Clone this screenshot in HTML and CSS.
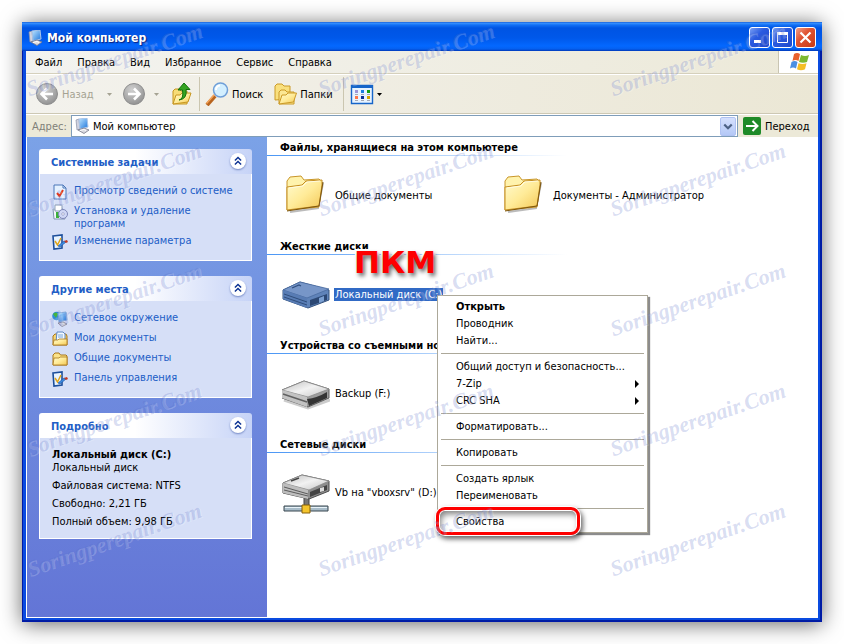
FILE: index.html
```html
<!DOCTYPE html>
<html lang="ru">
<head>
<meta charset="utf-8">
<title>Мой компьютер</title>
<link rel="stylesheet" href="styles.css">
</head>
<body>
<svg class="defs" aria-hidden="true">
  <defs>
    <linearGradient id="gFolder" x1="0" y1="0" x2="1" y2="1"><stop offset="0" stop-color="#fffbd0"/><stop offset=".5" stop-color="#ffeb98"/><stop offset="1" stop-color="#f3c755"/></linearGradient>
    <radialGradient id="gGrey" cx=".4" cy=".3" r=".8"><stop offset="0" stop-color="#d0d0d0"/><stop offset=".6" stop-color="#a8a8a8"/><stop offset="1" stop-color="#8a8a8a"/></radialGradient>
    <linearGradient id="gScreen" x1="0" y1="0" x2="1" y2="1"><stop offset="0" stop-color="#bfe6ff"/><stop offset="1" stop-color="#1b74dc"/></linearGradient>
    <linearGradient id="gSilver" x1="0" y1="0" x2="1" y2="1"><stop offset="0" stop-color="#bdbdbd"/><stop offset=".5" stop-color="#f2f2f2"/><stop offset="1" stop-color="#c4c4c4"/></linearGradient>
    <symbol id="pc" viewBox="0 0 16 16">
      <path d="M1 2l3-1 1 10-3 1z" fill="#d0d3e0" stroke="#8a8fa5" stroke-width=".7"/>
      <path d="M4 1l8-1 1 9-8 2z" fill="url(#gScreen)" stroke="#a9c4e8" stroke-width="1"/>
      <path d="M3 12l6-2 5 2-5 3.500z" fill="#d9d9df" stroke="#77798a" stroke-width=".8"/>
      <path d="M5 12.500l4-1 2 1" fill="none" stroke="#fff"/>
    </symbol>
    <symbol id="bigfolder" viewBox="0 0 48 48">
      <path d="M8 41l28-4 5-25" fill="none" stroke="#777" stroke-opacity=".5" stroke-width="2"/>
      <path d="M5 39V10l3-4 11-1 3 4 15-1 3 3-3 25z" fill="#fff3ad" stroke="#c9962a" stroke-width="1"/>
      <path d="M5 39V16l15-2 4-4 16-1v5l-3 21z" fill="url(#gFolder)" stroke="#c58e21" stroke-width="1"/>
      <path d="M7 17l14-2 4-4 13-1" fill="none" stroke="#fffbe0" stroke-width="1"/>
      <path d="M5 40l32-5 4-24" fill="none" stroke="#7d5710" stroke-width="1"/>
    </symbol>
    <symbol id="smallfolder" viewBox="0 0 16 16">
      <path d="M1 14V4l2-2h4l1.500 2H14l1 1v9z" fill="#fbe38a" stroke="#a9771b"/>
      <path d="M1 14l1-7h5l1-1h7v8z" fill="url(#gFolder)" stroke="#a9771b" stroke-width=".8"/>
    </symbol>
    <symbol id="control" viewBox="0 0 16 16">
      <path d="M1 2l9-1v13l-8 1z" fill="#e9f4ff" stroke="#1d4f9c" stroke-width="1.600"/>
      <path d="M3 7l2.500 4L9 4" fill="none" stroke="#e0a51a" stroke-width="1.500"/>
      <path d="M6 12l6-5 2 1-6 5z" fill="#3c8be0" stroke="#1d4f9c" stroke-width=".6"/>
      <path d="M12 7l3-1 1 2-2 1z" fill="#c43a22"/>
    </symbol>
    <symbol id="up2" viewBox="0 0 18 18">
      <path d="M5.500 8.500L9 5l3.500 3.500M5.500 13L9 9.500 12.500 13" fill="none" stroke="#0b3192" stroke-width="1.600"/>
    </symbol>
    <symbol id="down" viewBox="0 0 5 3"><path d="M0 0h5L2.500 3z" fill="currentColor"/></symbol>
  </defs>
</svg>

<div class="window">
  <header class="titlebar">
    <svg class="i16"><use href="#pc"/></svg>
    <h1>Мой компьютер</h1>
    <button class="cap" aria-label="Свернуть"><svg viewBox="0 0 19 19"><path d="M4 12h7v3H4z" fill="#fff"/></svg></button>
    <button class="cap" aria-label="Развернуть"><svg viewBox="0 0 19 19"><path d="M4.500 4.500v10h10v-10z" fill="none" stroke="#fff"/><path d="M4 4h11v3H4z" fill="#fff"/></svg></button>
    <button class="cap cap-close" aria-label="Закрыть"><svg viewBox="0 0 19 19"><path d="M4.500 4.500l10 10M14.500 4.500l-10 10" stroke="#fff" stroke-width="2.200"/></svg></button>
  </header>

  <div class="client">
    <nav class="menubar">
      <button>Файл</button><button>Правка</button><button>Вид</button><button>Избранное</button><button>Сервис</button><button>Справка</button>
      <span class="flag"><svg viewBox="0 0 20 18">
        <path d="M5 1q3-2 6 0L9.500 8q-3-2-6 0z" fill="#e8602c"/><path d="M12 2q4 2 8 0L18 9q-4 1.500-8 0z" fill="#7cb82f"/>
        <path d="M2.500 9q3-2 6 0L7 15.500q-3-2-6 0z" fill="#4b8fe2"/><path d="M9.500 10.200q4 1.500 8 0l-1.500 6q-4 2-8 0z" fill="#f4bd25"/></svg></span>
    </nav>

    <div class="toolbar">
      <button class="tool off back"><svg class="i24" viewBox="0 0 24 24"><circle cx="12" cy="12" r="10.500" fill="url(#gGrey)" stroke="#8e8e8e"/><path d="M18 12H7M12 6.500L6.500 12l5.500 5.500" fill="none" stroke="#fff" stroke-width="2.600"/></svg>Назад<svg class="arr"><use href="#down"/></svg></button>
      <button class="tool off fwd" aria-label="Вперед"><svg class="i24" viewBox="0 0 24 24"><circle cx="12" cy="12" r="10.500" fill="url(#gGrey)" stroke="#8e8e8e"/><path d="M6 12h11M12 6.500l5.500 5.500-5.500 5.500" fill="none" stroke="#fff" stroke-width="2.600"/></svg><svg class="arr"><use href="#down"/></svg></button>
      <button class="tool up" aria-label="Вверх"><svg class="i24" viewBox="0 0 24 24"><path d="M3 22V9l2-2h4l2 2h6v13z" fill="#f7dc77" stroke="#c79621"/><path d="M3 22l3-9h4l2-2h9l-3 9z" fill="url(#gFolder)" stroke="#c79621"/><path d="M9 18q5-1 3.500-10H8l6-7 6 6.500h-4Q17.500 17 9 18z" fill="#35a422" stroke="#11710c"/></svg></button>
      <span class="bar"></span>
      <button class="tool"><svg class="i24" viewBox="0 0 24 24"><path d="M2 23l8-9" stroke="#b8641e" stroke-width="4"/><path d="M1.500 21.500l8-9" stroke="#f3a45b" stroke-width="1.500"/><circle cx="15.500" cy="8" r="7" fill="#d3efff" stroke="#6f9fd8" stroke-width="1.500"/><path d="M11 8q0-4 4-4.500" fill="none" stroke="#fff" stroke-width="2"/></svg>Поиск</button>
      <button class="tool folders"><svg class="i24" viewBox="0 0 24 24"><path d="M2 18V4l2-2h5l2 2h6v13z" fill="#f9e07e" stroke="#cb9a26"/><path d="M6 22V10l2-2h4l2 2h7v12z" fill="#fbe794" stroke="#cb9a26"/><path d="M6 22l3-9h4l2-2h8.500l-3 9z" fill="url(#gFolder)" stroke="#cb9a26"/></svg>Папки</button>
      <span class="bar"></span>
      <button class="tool views" aria-label="Вид"><svg class="i24" viewBox="0 0 24 24"><path d="M1.500 3.500h21v18h-21z" fill="#e7f3ff" stroke="#1665c9" stroke-width="1.400"/><path d="M1 3h22v3H1z" fill="#1665c9"/><path d="M5 8h3v3H5z" fill="#9c96d6"/><path d="M11 8h3v3h-3z" fill="#1b7fe0"/><path d="M17 8h3v3h-3z" fill="#13a015"/><path d="M5 14h3v3H5z" fill="#ff7748"/><path d="M11 14h3v3h-3z" fill="#0b2f93"/><path d="M17 14h3v3h-3z" fill="#d9a400"/><path d="M5 12.500h3m3 0h3m3 0h3M5 18.500h3m3 0h3m3 0h3" stroke="#a5a9b5"/></svg><svg class="arr"><use href="#down"/></svg></button>
    </div>

    <form class="address">
      <label for="addr">Адрес:</label>
      <div class="combo">
        <svg class="i16"><use href="#pc"/></svg>
        <input id="addr" type="text" value="Мой компьютер">
        <button type="button" class="drop" aria-label="Показать список"><svg viewBox="0 0 15 18"><path d="M3.500 7l4 4 4-4" fill="none" stroke="#4d6185" stroke-width="2.400"/></svg></button>
      </div>
      <button type="button" class="go"><svg viewBox="0 0 18 18"><rect width="18" height="18" rx="2" fill="#1e8a28"/><path d="M3 9h11M9.500 4l5 5-5 5" fill="none" stroke="#fff" stroke-width="2"/></svg>Переход</button>
    </form>

    <div class="body">
      <aside class="side">
        <section class="panel">
          <h2>Системные задачи<button aria-label="Свернуть раздел"><svg><use href="#up2"/></svg></button></h2>
          <ul>
            <li><svg class="i16" viewBox="0 0 16 16"><path d="M2 1h9l3 3v11H2z" fill="#e4f1ff" stroke="#4a77b8"/><path d="M11 1v3h3" fill="none" stroke="#4a77b8"/><path d="M5 9l2.500 3L11 6" fill="none" stroke="#e0391c" stroke-width="2"/></svg><a href="#">Просмотр сведений о системе</a></li>
            <li><svg class="i16" viewBox="0 0 16 16"><path d="M1 5h10l2 10H2z" fill="#f2f6fb" stroke="#7f93b0"/><path d="M3 1h7v6H3z" fill="#fff" stroke="#8699b5"/><path d="M4 8h3v6H4z" fill="#3bb03a"/><circle cx="11" cy="10" r="4.500" fill="#cfd7f5" stroke="#7d86b8"/><circle cx="11" cy="10" r="1.300" fill="#fff" stroke="#7d86b8" stroke-width=".6"/></svg><a href="#">Установка и удаление программ</a></li>
            <li><svg class="i16"><use href="#control"/></svg><a href="#">Изменение параметра</a></li>
          </ul>
        </section>
        <section class="panel">
          <h2>Другие места<button aria-label="Свернуть раздел"><svg><use href="#up2"/></svg></button></h2>
          <ul>
            <li><svg class="i16" viewBox="0 0 16 16"><circle cx="4.500" cy="5" r="4.300" fill="#2f8fd8"/><path d="M1 3q3-3 5 0L4 7z" fill="#47b53c"/><path d="M6 2l8-1 1 8-8 2z" fill="url(#gScreen)" stroke="#7fa6d8"/><path d="M6 12l5-1 4 2-5 2.500z" fill="#d5d5de" stroke="#777a90" stroke-width=".8"/></svg><a href="#">Сетевое окружение</a></li>
            <li><svg class="i16" viewBox="0 0 16 16"><path d="M1 14V5l2-2h11l1 2v9z" fill="#f6d573" stroke="#a9771b"/><path d="M5 1h6l2 2v8H4z" fill="#f4faff" stroke="#5d86c4"/><path d="M6 4h5M6 6h5" stroke="#76a5de"/><path d="M1 14l1-5h4l1-1h8v6z" fill="url(#gFolder)" stroke="#a9771b" stroke-width=".8"/></svg><a href="#">Мои документы</a></li>
            <li><svg class="i16"><use href="#smallfolder"/></svg><a href="#">Общие документы</a></li>
            <li><svg class="i16"><use href="#control"/></svg><a href="#">Панель управления</a></li>
          </ul>
        </section>
        <section class="panel">
          <h2>Подробно<button aria-label="Свернуть раздел"><svg><use href="#up2"/></svg></button></h2>
          <div class="details">
            <p><b>Локальный диск (C:)</b><br>Локальный диск</p>
            <p>Файловая система: NTFS</p>
            <p>Свободно: 2,21 ГБ</p>
            <p>Полный объем: 9,98 ГБ</p>
          </div>
        </section>
      </aside>

      <main class="main">
        <section class="group">
          <h3>Файлы, хранящиеся на этом компьютере</h3>
          <div class="items">
            <div class="item"><svg class="i48"><use href="#bigfolder"/></svg><span>Общие документы</span></div>
            <div class="item"><svg class="i48"><use href="#bigfolder"/></svg><span>Документы - Администратор</span></div>
          </div>
        </section>
        <section class="group">
          <h3>Жесткие диски</h3>
          <div class="items">
            <div class="item"><svg class="i48" viewBox="0 0 48 48"><path d="M1 20L18 12l29 8v10L26 38 1 29z" fill="#5f83b9" stroke="#36547f"/><path d="M1 20L18 12l29 7-22 9z" fill="#7796c8" stroke="#496b9f" stroke-width=".8"/><path d="M1 20l24 8v10L1 29z" fill="#587cb4"/><path d="M2 24l23 8M2 27l23 8" stroke="#304e7b"/><path d="M28 30l17-6v6l-17 6z" fill="#2c4874"/><path d="M37 28l5-2v5l-5 2z" fill="#7ba0d2"/><path d="M10 18l7-3 2 1" fill="none" stroke="#2f4e7f" stroke-width="1.200"/></svg><span class="sel">Локальный диск (C:)</span></div>
          </div>
        </section>
        <section class="group">
          <h3>Устройства со съемными носителями</h3>
          <div class="items">
            <div class="item"><svg class="i48" viewBox="0 0 48 48"><path d="M2 31l24 8 22-8" fill="none" stroke="#999" stroke-opacity=".5" stroke-width="3"/><path d="M0 21L22 12l25 8v9l-21 9L0 29z" fill="#9c9c9c" stroke="#5d5d5d"/><path d="M0 21L22 12l25 8-21 8z" fill="url(#gSilver)" stroke="#8a8a8a" stroke-width=".8"/><path d="M0 21l25 7v10L0 29z" fill="#c2c2c2"/><path d="M1 25l24 8" stroke="#606060" stroke-width="1.500"/><path d="M25 30q10-1 20-7v6l-18 8z" fill="#343434"/></svg><span>Backup (F:)</span></div>
          </div>
        </section>
        <section class="group">
          <h3>Сетевые диски</h3>
          <div class="items">
            <div class="item"><svg class="i48" viewBox="0 0 48 48"><path d="M22 30h5v10h-5z" fill="#777" stroke="#444"/><path d="M2 38h44v5H2z" fill="#a8bcc9" stroke="#39464f"/><path d="M3 39.500h42" stroke="#e8f3f9"/><path d="M20 37h8v8h-8z" fill="#f5c52c" stroke="#87600c"/><path d="M1 15L20 7l27 6v10l-20 8L1 25z" fill="#8d8d8d" stroke="#4c4c4c"/><path d="M1 15L20 7l27 6-20 9z" fill="url(#gSilver)" stroke="#8a8a8a" stroke-width=".8"/><path d="M1 15l25 7v9L1 25z" fill="#bdbdbd"/><path d="M2 19l24 7M2 22l24 6" stroke="#5b5b5b"/><path d="M28 24l17-7v5l-17 7z" fill="#444"/><path d="M38 20l4-1v4l-4 1z" fill="#ddd"/><path d="M9 13l8-3" stroke="#444" stroke-width="1.500"/></svg><span>Vb на "vboxsrv" (D:)</span></div>
          </div>
        </section>

        <div class="hint">ПКМ</div>

        <div class="context" role="menu">
          <button role="menuitem"><b>Открыть</b></button>
          <button role="menuitem">Проводник</button>
          <button role="menuitem">Найти...</button>
          <hr>
          <button role="menuitem">Общий доступ и безопасность...</button>
          <button role="menuitem" class="more">7-Zip</button>
          <button role="menuitem" class="more">CRC SHA</button>
          <hr>
          <button role="menuitem">Форматировать...</button>
          <hr>
          <button role="menuitem">Копировать</button>
          <hr>
          <button role="menuitem">Создать ярлык</button>
          <button role="menuitem">Переименовать</button>
          <hr>
          <button role="menuitem" class="ringed">Свойства</button>
        </div>
      </main>
    </div>
  </div>

  <div class="marks" aria-hidden="true">
    <span>Soringperepair.Com</span><span>Soringperepair.Com</span><span>Soringperepair.Com</span>
    <span>Soringperepair.Com</span><span>Soringperepair.Com</span><span>Soringperepair.Com</span>
    <span>Soringperepair.Com</span><span>Soringperepair.Com</span><span>Soringperepair.Com</span>
    <span>Soringperepair.Com</span><span>Soringperepair.Com</span><span>Soringperepair.Com</span>
    <span>Soringperepair.Com</span><span>Soringperepair.Com</span><span>Soringperepair.Com</span>
  </div>
</div>
</body>
</html>
```
FILE: styles.css
```css
*, *::after { box-sizing: border-box; }

body {
  margin: 0;
  padding: 22px;
  min-height: 100vh;
  display: flex;
  background: #fff;
  color: #000;
  font: 11px/13px "DejaVu Sans Condensed", Tahoma, "DejaVu Sans", sans-serif;
}

button, input { font: inherit; color: inherit; margin: 0; padding: 0; border: 0; background: none; }
button { display: flex; align-items: center; white-space: nowrap; }
h1, h2, h3, p, ul { margin: 0; padding: 0; }
svg { display: block; flex: none; }

.defs { position: absolute; width: 0; height: 0; }
.i16 { width: 16px; height: 16px; }
.i24 { width: 24px; height: 24px; }
.i48 { width: 48px; height: 48px; }

/* Window frame */
.window {
  position: relative;
  flex: 1;
  display: flex;
  flex-direction: column;
  padding: 0 4px 4px;
  background: #0a4be0;
  box-shadow: inset 0 0 0 1px #0019a8, inset -2px -2px 0 #001ea0, 0 2px 20px rgba(0, 0, 0, .6);
}

.titlebar {
  display: flex;
  align-items: center;
  gap: 2px;
  height: 29px;
  margin: 0 -4px;
  padding: 2px 6px 0 6px;
  background: linear-gradient(#0a50d0 0, #3c94ff 1px, #1270f5 3px, #0054e3 6px, #0058ea 16px, #0368ff 24px, #0560f0 27px, #0038b8 29px);
}
.titlebar h1 {
  flex: 1;
  margin-left: 1px;
  color: #fff;
  font-size: 12px;
  line-height: 16px;
  text-shadow: 1px 1px 1px #0b1f7c;
}
.cap {
  width: 21px;
  height: 21px;
  border: 1px solid #fff;
  border-radius: 3px;
  background: linear-gradient(135deg, #7ba0f4, #2a5be0 40%, #1d48cc);
}
.cap svg { width: 19px; height: 19px; }
.cap-close { background: linear-gradient(135deg, #f0a08a, #e05433 40%, #c63a15); }

.client { flex: 1; display: flex; flex-direction: column; background: #fff; }

/* Menu bar */
.menubar {
  display: flex;
  height: 23px;
  padding-left: 1px;
  background: linear-gradient(90deg, #f3f3f0, #ece9d8);
  border-bottom: 1px solid #d5d0bc;
}
.menubar button { padding: 0 8px 0 7px; }
.menubar button:first-child { padding-left: 8px; }
.flag {
  display: flex;
  align-items: center;
  justify-content: center;
  width: 40px;
  margin-left: auto;
  background: #fff;
  border-left: 1px solid #c9c5b2;
}
.flag svg { width: 20px; height: 18px; }

/* Toolbar */
.toolbar {
  display: flex;
  align-items: center;
  height: 40px;
  padding-left: 9px;
  background: linear-gradient(90deg, #f3f2ed, #ebe7d5);
  border-top: 1px solid #fff;
  border-bottom: 1px solid #cdc8b4;
}
.tool { gap: 3px; }
.off { color: #a5a393; }
.arr { width: 5px; height: 3px; }
.back { width: 87px; }
.back .arr { margin-left: auto; margin-right: 10px; }
.fwd { width: 48px; gap: 8px; }
.up { width: 29px; }
.bar { width: 1px; height: 34px; margin-right: 5px; background: #cbc6b0; }
.folders { margin: 0 10px; }
.views { margin-left: 1px; }

/* Address bar */
.address {
  display: flex;
  height: 23px;
  border-top: 1px solid #fff;
  background: #ece9d8;
}
.address label { width: 45px; padding: 5px 0 0 6px; color: #808078; }
.combo {
  flex: 1;
  display: flex;
  align-items: center;
  gap: 2px;
  padding: 0 1px 0 3px;
  background: #fff;
  border: 1px solid #7f9db9;
}
.combo input { flex: 1; min-width: 0; outline: 0; }
.drop {
  width: 16px;
  height: 19px;
  border: 1px solid #b0c2f2;
  border-radius: 2px;
  background: linear-gradient(#d5e0fd, #b4c8f6);
}
.go { width: 80px; gap: 4px; padding-left: 5px; }
.go svg { width: 18px; height: 18px; }

.body { flex: 1; display: flex; }

/* Task pane */
.side {
  width: 241px;
  padding: 12px 15px 12px 12px;
  border-left: 1px solid #fff;
  border-bottom: 1px solid #fff;
  background: linear-gradient(#7ba2e7, #6375d6);
}
.panel { margin-bottom: 15px; }
.panel h2 {
  display: flex;
  align-items: center;
  justify-content: space-between;
  height: 25px;
  padding: 2px 6px 0 12px;
  border-radius: 3px 3px 0 0;
  background: linear-gradient(90deg, #fff 45%, #c6d3f7);
  color: #215dc6;
  font-size: 11px;
}
.panel h2 button {
  width: 16px;
  height: 16px;
  margin-bottom: 3px;
  border-radius: 50%;
  background: #fff;
  box-shadow: 0 1px 2px #7388c4;
}
.panel h2 svg { width: 16px; height: 16px; }
.panel ul, .details {
  border: 1px solid #fff;
  border-top: 0;
  background: #d6dff7;
}
.panel ul { padding: 7px 12px 9px; list-style: none; }
.panel li { display: flex; gap: 6px; min-height: 20px; padding: 3px 0 1px; }
.panel li svg { margin-bottom: -4px; }
.panel a { color: #215dc6; text-decoration: none; }
.details { padding: 10px 12px 5px; }
.details p { margin-bottom: 5px; }

/* Contents pane */
.main { position: relative; flex: 1; background: #fff; }
.group h3 {
  height: 19px;
  padding: 4px 0 0 13px;
  font-size: 11px;
  line-height: 13px;
  background: linear-gradient(90deg, #4a96f5, #fff 300px) bottom / 100% 1px no-repeat;
}
.items { display: flex; height: 80px; padding: 0 0 2px 15px; }
.item { display: flex; align-items: center; gap: 4px; width: 218px; white-space: nowrap; }
.item span { padding: 0 1px; }
.item .sel { background: #316ac5; color: #fff; }

.hint {
  position: absolute;
  left: 87px;
  top: 107px;
  color: #fe0000;
  font: bold 31px/36px "DejaVu Sans", sans-serif;
  -webkit-text-stroke: 4px #fff;
  paint-order: stroke fill;
  text-shadow: 2px 3px 4px rgba(0, 0, 0, .6);
}

.context {
  position: absolute;
  left: 170px;
  top: 158px;
  width: 211px;
  padding: 2px 3px;
  background: #fff;
  border: 1px solid #aca899;
  box-shadow: 2px 2px 1px rgba(0, 0, 0, .45);
}
.context button { position: relative; width: 100%; height: 17px; padding-left: 15px; }
.context hr { height: 1px; margin: 4px 0; border: 0; background: #aca899; }
.more::after {
  content: "";
  margin: 0 5px 0 auto;
  border: 4px solid transparent;
  border-left-color: #000;
  border-right: 0;
}
.ringed::after {
  content: "";
  position: absolute;
  left: -5px;
  top: -6px;
  width: 144px;
  height: 28px;
  border: 3px solid #fe0000;
  border-radius: 9px;
  box-shadow: 0 0 0 1px #fff, inset 0 0 0 1px #fff, 2px 3px 5px 1px rgba(0, 0, 0, .6), inset 2px 4px 6px rgba(0, 0, 0, .5);
}

/* Diagonal marks over the whole window */
.marks {
  position: absolute;
  inset: 0;
  display: grid;
  grid-template-columns: repeat(3, 292px);
  grid-auto-rows: 120px;
  pointer-events: none;
}
.marks span {
  width: 184px;
  height: 76px;
  line-height: 76px;
  text-align: center;
  font-family: "Liberation Serif", serif;
  font-style: italic;
  font-weight: bold;
  font-size: 22px;
  white-space: nowrap;
  color: rgba(90, 110, 200, .24);
  text-shadow: 1px 1px 0 rgba(255, 255, 255, .2);
  transform: rotate(-19deg);
}
```
